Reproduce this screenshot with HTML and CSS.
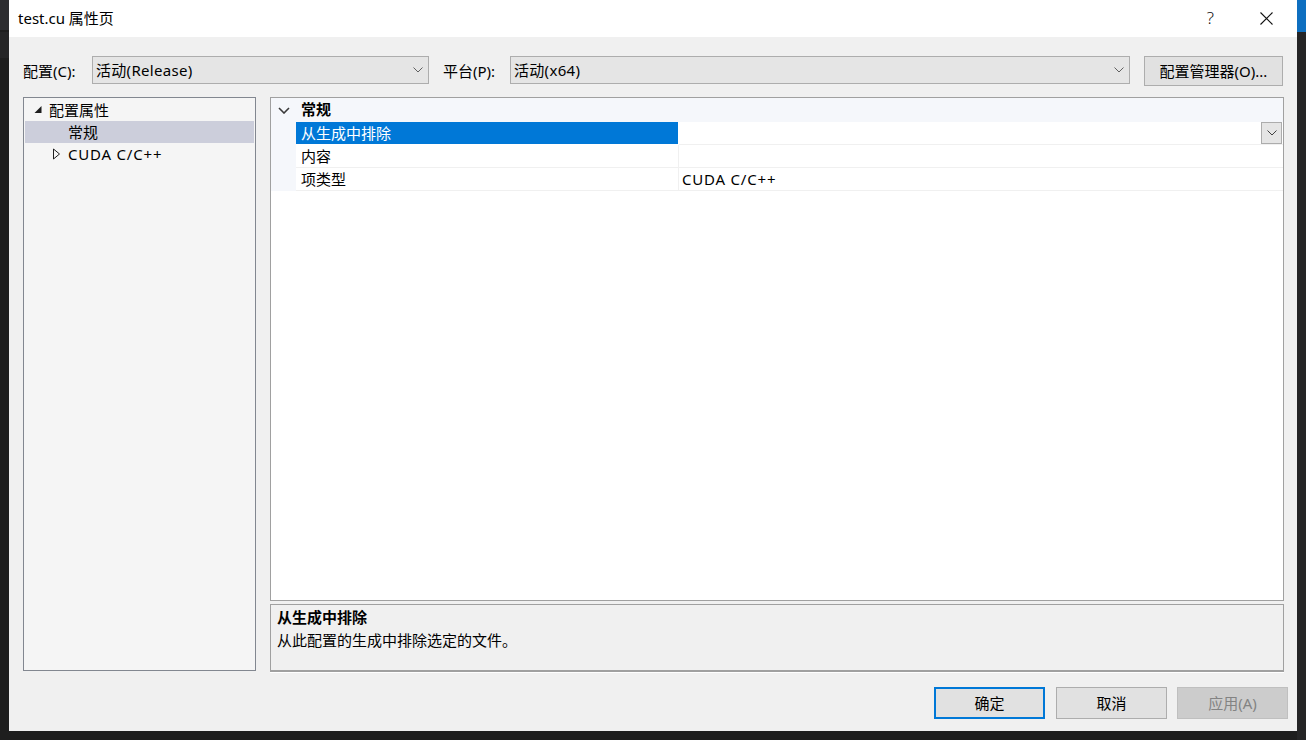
FILE: index.html
```html
<!DOCTYPE html>
<html lang="zh-CN">
<head>
<meta charset="utf-8">
<title>test.cu 属性页</title>
<link rel="stylesheet" href="styles.css">
</head>
<body>
<div class="desktop">
  <div class="edge-left">
    <span class="edge-block eb1"></span>
    <span class="edge-block eb2"></span>
  </div>
  <div class="dialog">
    <div class="titlebar">
      <span class="title">test.cu 属性页</span>
      <div class="title-btns">
        <span class="help">?</span>
        <svg class="close" width="13" height="13" viewBox="0 0 13 13"><path d="M0.5 0.5 L12.5 12.5 M12.5 0.5 L0.5 12.5" stroke="#111" stroke-width="1.1" fill="none"/></svg>
      </div>
    </div>
    <div class="body">
      <div class="config-row">
        <span class="label label-config">配置(C):</span>
        <div class="combo combo-config">
          <span class="latin">活动(Release)</span>
          <svg class="chev" width="10" height="6" viewBox="0 0 10 6"><path d="M0.5 0.5 L5 5 L9.5 0.5" stroke="#606060" stroke-width="1" fill="none"/></svg>
        </div>
        <span class="label label-platform">平台(P):</span>
        <div class="combo combo-platform">
          <span class="latin">活动(x64)</span>
          <svg class="chev" width="10" height="6" viewBox="0 0 10 6"><path d="M0.5 0.5 L5 5 L9.5 0.5" stroke="#606060" stroke-width="1" fill="none"/></svg>
        </div>
        <div class="btn btn-manager">配置管理器(O)...</div>
      </div>

      <div class="main">
        <div class="tree">
          <div class="tree-row level0">
            <span class="toggle"><svg width="16" height="10" viewBox="0 0 16 10"><path d="M8.5 1 L8.5 8 L1.5 8 Z" fill="#1e1e1e"/></svg></span>
            <span class="tree-text">配置属性</span>
          </div>
          <div class="tree-row level1 selected">
            <span class="toggle"></span>
            <span class="tree-text">常规</span>
          </div>
          <div class="tree-row level0-child">
            <span class="toggle"><svg width="16" height="12" viewBox="0 0 16 12"><path d="M1.5 1 L7.5 6 L1.5 11 Z" fill="none" stroke="#1e1e1e" stroke-width="1"/></svg></span>
            <span class="tree-text cuda">CUDA C/C++</span>
          </div>
        </div>

        <div class="right">
          <div class="grid">
            <div class="category">
              <span class="cat-toggle"><svg width="12" height="7" viewBox="0 0 12 7"><path d="M1 1 L6 6 L11 1" stroke="#3a3a3a" stroke-width="1.6" fill="none"/></svg></span>
              <span class="cat-text">常规</span>
            </div>
            <div class="prop-row active">
              <span class="gutter"></span>
              <span class="prop-name">从生成中排除</span>
              <span class="prop-value">
                <span class="value-text"></span>
                <span class="drop-btn"><svg width="10" height="6" viewBox="0 0 10 6"><path d="M0.5 0.5 L5 5 L9.5 0.5" stroke="#404040" stroke-width="1" fill="none"/></svg></span>
              </span>
            </div>
            <div class="prop-row">
              <span class="gutter"></span>
              <span class="prop-name">内容</span>
              <span class="prop-value"><span class="value-text"></span></span>
            </div>
            <div class="prop-row">
              <span class="gutter"></span>
              <span class="prop-name">项类型</span>
              <span class="prop-value"><span class="value-text cuda">CUDA C/C++</span></span>
            </div>
          </div>
          <div class="desc">
            <div class="desc-title">从生成中排除</div>
            <div class="desc-text">从此配置的生成中排除选定的文件。</div>
          </div>
        </div>
      </div>

      <div class="footer">
        <div class="btn btn-ok">确定</div>
        <div class="btn btn-cancel">取消</div>
        <div class="btn btn-apply">应用(A)</div>
      </div>
    </div>
  </div>
  <div class="edge-right">
    <span class="edge-blue"></span>
  </div>
</div>
</body>
</html>
```

FILE: styles.css
```css
* { box-sizing: border-box; }

html, body {
  margin: 0;
  padding: 0;
  background: #1e1e1e;
}

body {
  font-family: "Noto Sans", "Noto Sans CJK SC", sans-serif;
  font-size: 15px;
  color: #000;
}

.desktop {
  width: 1306px;
  height: 740px;
  display: flex;
  align-items: flex-start;
  background: #1e1e1e;
  overflow: hidden;
}

.edge-left {
  width: 9px;
  height: 740px;
  display: flex;
  flex-direction: column;
  background: #1e1e1e;
}

.edge-block { display: block; width: 9px; }
.eb1 { height: 30px; background: #2d2d30; }
.eb2 { height: 26px; margin-top: 2px; background: #252526; }

.edge-right {
  width: 9px;
  height: 740px;
  display: flex;
  flex-direction: column;
  background: #252526;
}

.edge-blue { display: block; width: 9px; height: 32px; background: #0e6fc0; }

.dialog {
  width: 1288px;
  height: 731px;
  background: #f0f0f0;
  display: flex;
  flex-direction: column;
}

.titlebar {
  height: 37px;
  background: #fff;
  display: flex;
  align-items: center;
  justify-content: space-between;
  padding-left: 9px;
}

.title {
  font-size: 15px;
  line-height: 20px;
  margin-top: -1px;
}

.title-btns {
  display: flex;
  align-items: center;
  height: 37px;
}

.help {
  font-size: 17px;
  line-height: 20px;
  color: #111;
  font-weight: 300;
  margin-right: 46px;
  margin-top: -1px;
}

.close {
  display: block;
  margin-right: 24px;
  margin-top: -1px;
}

.body {
  flex: 1;
  padding: 19px 13px 0 14px;
  display: flex;
  flex-direction: column;
}

.config-row {
  height: 30px;
  display: flex;
  align-items: center;
}

.label {
  line-height: 20px;
  margin-top: -1px;
}
.label-config { width: 69px; }
.label-platform { width: 67px; margin-left: 14px; }

.latin { letter-spacing: 0.3px; }
.cuda { letter-spacing: 0.8px; }

.combo {
  height: 28px;
  margin-top: -2px;
  background: #e5e5e5;
  border: 1px solid #adadad;
  display: flex;
  align-items: center;
  justify-content: space-between;
  padding-left: 3px;
  padding-right: 5px;
  line-height: 20px;
}
.combo-config { width: 337px; }
.combo-platform { width: 620px; }
.chev { display: block; }

.btn {
  display: flex;
  align-items: center;
  justify-content: center;
  background: #e1e1e1;
  border: 1px solid #adadad;
  line-height: 20px;
}

.btn-manager {
  width: 139px;
  height: 30px;
  margin-left: 14px;
}

.main {
  margin-top: 11px;
  height: 575px;
  display: flex;
  gap: 14px;
}

.tree {
  width: 233px;
  height: 574px;
  background: #f5f5f5;
  border: 1px solid #828790;
  padding: 1px;
}

.tree-row {
  height: 22px;
  display: flex;
  align-items: center;
  line-height: 20px;
}

.tree-row .toggle {
  width: 16px;
  height: 22px;
  display: flex;
  align-items: center;
}
.tree-row .toggle svg { display: block; }

.level0 { padding-left: 8px; }
.level1 { padding-left: 27px; }
.level0-child { padding-left: 27px; }

.tree-row.selected { background: #cccedb; }

.right {
  width: 1014px;
  display: flex;
  flex-direction: column;
  gap: 3px;
}

.grid {
  height: 504px;
  background: #fff;
  border: 1px solid #a0a0a0;
}

.category {
  height: 24px;
  background: #f5f7fb;
  display: flex;
  align-items: center;
}

.cat-toggle {
  width: 25px;
  display: flex;
  justify-content: center;
  padding-left: 1px;
}
.cat-toggle svg { display: block; }

.cat-text {
  font-weight: 700;
  padding-left: 5px;
  line-height: 20px;
  margin-top: -2px;
}

.prop-row {
  height: 23px;
  display: flex;
}

.gutter {
  width: 25px;
  background: #f5f7fb;
}

.prop-name {
  width: 383px;
  padding-left: 5px;
  border-right: 1px solid #f0f0f0;
  border-bottom: 1px solid #f0f0f0;
  line-height: 22px;
  white-space: nowrap;
}

.prop-row.active .prop-name {
  background: #0078d7;
  color: #fff;
  border-bottom-color: #fff;
  border-right-color: #fff;
}

.prop-value {
  flex: 1;
  display: flex;
  border-bottom: 1px solid #f0f0f0;
  padding-left: 3px;
  line-height: 22px;
}

.value-text { flex: 1; }

.drop-btn {
  width: 21px;
  height: 22px;
  background: #e5e5e5;
  border: 1px solid #acacac;
  display: flex;
  align-items: center;
  justify-content: center;
  margin-right: 1px;
}
.drop-btn svg { display: block; }

.desc {
  height: 68px;
  background: #f0f0f0;
  border: 1px solid #a0a0a0;
  border-bottom: 2px solid #a0a0a0;
  box-shadow: 0 1px 0 #fff;
  padding: 1px 6px 0 6px;
}

.desc-title {
  font-weight: 700;
  line-height: 22px;
}

.desc-text {
  line-height: 22px;
  margin-top: 1px;
}

.footer {
  margin-top: 15px;
  margin-right: -4px;
  height: 32px;
  display: flex;
  justify-content: flex-end;
}

.footer .btn {
  width: 111px;
  height: 32px;
}

.btn-ok {
  border: 2px solid #0078d7;
}

.btn-cancel { margin-left: 11px; }

.btn-apply {
  margin-left: 10px;
  background: #cccccc;
  border-color: #bfbfbf;
  color: #838383;
}
```
